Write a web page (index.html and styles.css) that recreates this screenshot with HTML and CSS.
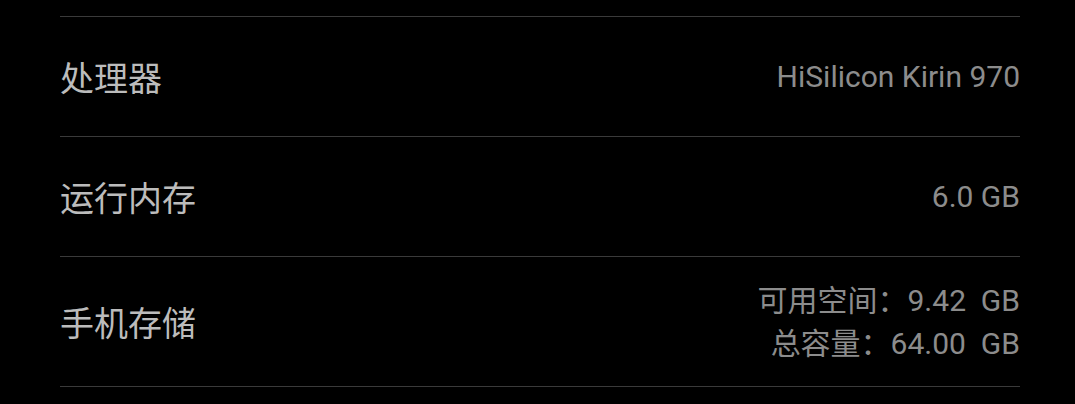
FILE: index.html
```html
<!DOCTYPE html>
<html>
<head>
<meta charset="UTF-8">
<title>关于手机</title>
<link rel="stylesheet" href="styles.css">
</head>
<body>
	<div id="list">
		<div class="row">
			<div class="label">处理器</div>
			<div class="value">HiSilicon Kirin 970</div>
		</div>
		<div class="row">
			<div class="label">运行内存</div>
			<div class="value">6.0 GB</div>
		</div>
		<div class="row tall">
			<div class="label">手机存储</div>
			<div class="value">
				<div>可用空间：9.42&nbsp; GB</div>
				<div>总容量：64.00&nbsp; GB</div>
			</div>
		</div>
	</div>
</body>
</html>
```

FILE: styles.css
```css
html {
	margin:0px;
	padding:0px;
	height:100%;
}

body {
	margin:0px;
	padding:0px;
	height:100%;
	background:#000000;
	font-family:Roboto,"Noto Sans CJK SC",sans-serif;
	overflow:hidden;
}

#list {
	padding:16px 55px 0px 60px;
}

.row {
	display:flex;
	align-items:center;
	justify-content:space-between;
	height:119px;
	border-top:1px solid #3a3a3a;
}

.row.tall {
	height:129px;
	border-bottom:1px solid #3a3a3a;
}

.label {
	color:#bcbcbc;
	font-family:"Noto Sans CJK SC",sans-serif;
	font-size:34px;
}

.value {
	color:#8c8c8c;
	font-size:30px;
	text-align:right;
	line-height:43px;
}
```
